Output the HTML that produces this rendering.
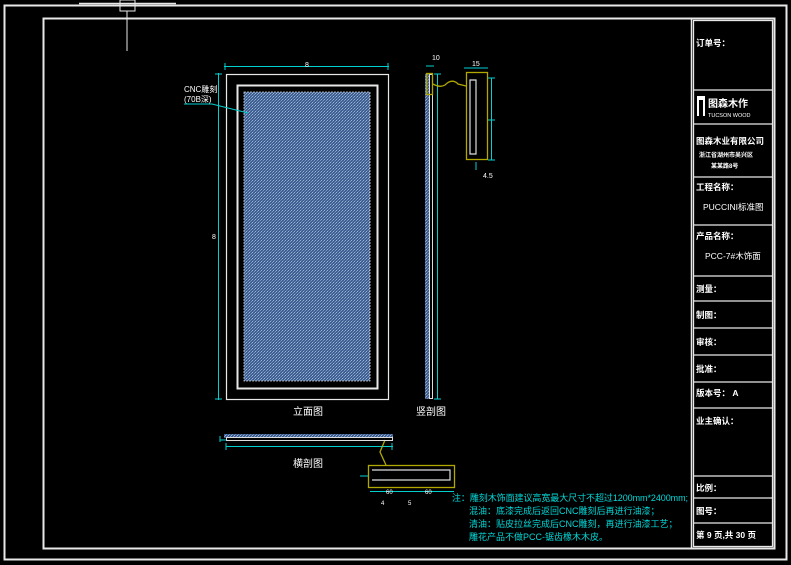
<!DOCTYPE html><html><head><meta charset="utf-8"><style>
html,body{margin:0;padding:0;background:#000;width:791px;height:565px;overflow:hidden}
svg{display:block}
text{font-family:"Liberation Sans","Noto Sans CJK SC",sans-serif;fill:#fff}
</style></head><body>
<svg width="791" height="565" viewBox="0 0 791 565" xmlns="http://www.w3.org/2000/svg">
<defs>
<pattern id="p" width="3" height="3" patternUnits="userSpaceOnUse">
<rect width="3" height="3" fill="#3f5f90"/><rect width="1" height="1" fill="#9ab4d8"/><rect x="2" y="1" width="1" height="1" fill="#7f9cc8"/><rect x="1" y="2" width="1" height="1" fill="#6a88b8"/>
</pattern>
</defs>
<g fill="none" stroke="#e8e8e8">
<rect x="4.5" y="5.5" width="782" height="554" stroke-width="2"/>
<rect x="43.5" y="18.5" width="731" height="530" stroke-width="2"/>
<line x1="79" y1="3.5" x2="176" y2="3.5" stroke-width="1.5"/>
<rect x="120" y="0" width="15" height="11" stroke-width="1"/>
<line x1="127" y1="11" x2="127" y2="51" stroke-width="1"/>
<line x1="691.5" y1="18" x2="691.5" y2="549" stroke-width="1.5"/>
<rect x="693.5" y="20.5" width="79" height="526" stroke-width="1.3"/>
<g stroke-width="1.3">
<line x1="693" y1="90" x2="773" y2="90"/><line x1="693" y1="124" x2="773" y2="124"/>
<line x1="693" y1="177" x2="773" y2="177"/><line x1="693" y1="225" x2="773" y2="225"/>
<line x1="693" y1="276" x2="773" y2="276"/><line x1="693" y1="301" x2="773" y2="301"/>
<line x1="693" y1="328" x2="773" y2="328"/><line x1="693" y1="355" x2="773" y2="355"/>
<line x1="693" y1="382" x2="773" y2="382"/><line x1="693" y1="408" x2="773" y2="408"/>
<line x1="693" y1="476" x2="773" y2="476"/><line x1="693" y1="498" x2="773" y2="498"/>
<line x1="693" y1="523" x2="773" y2="523"/>
</g>
<rect x="226.5" y="74.5" width="162" height="325" stroke-width="1.2"/>
<rect x="237.5" y="85.5" width="140" height="303" stroke-width="2"/>
</g>
<rect x="244" y="92" width="126" height="289" fill="url(#p)" stroke="#ccc" stroke-width="0.8" stroke-dasharray="2 1"/>
<g stroke="#00d0d0" fill="none" stroke-width="1">
<line x1="224" y1="66.5" x2="389" y2="66.5"/><line x1="225" y1="63" x2="225" y2="70"/><line x1="388" y1="63" x2="388" y2="70"/>
<line x1="218.5" y1="73" x2="218.5" y2="400"/><line x1="215" y1="74" x2="222" y2="74"/><line x1="215" y1="399" x2="222" y2="399"/>
<polyline points="184,104 212,104 248,113"/>
<line x1="437.5" y1="74" x2="437.5" y2="399"/><line x1="434" y1="74" x2="441" y2="74"/><line x1="434" y1="399" x2="441" y2="399"/>
<line x1="226" y1="446.5" x2="393" y2="446.5"/><line x1="226" y1="443" x2="226" y2="450"/><line x1="392" y1="443" x2="392" y2="450"/>
<line x1="491.5" y1="78" x2="491.5" y2="160"/><line x1="488" y1="78" x2="495" y2="78"/><line x1="488" y1="120" x2="495" y2="120"/><line x1="488" y1="160" x2="495" y2="160"/>
<line x1="464" y1="68" x2="488" y2="68"/><line x1="476" y1="162" x2="476" y2="170"/>
<line x1="426" y1="66" x2="434" y2="66"/>
<line x1="370" y1="491.5" x2="454" y2="491.5"/><line x1="360" y1="476" x2="368" y2="476"/>
<line x1="220" y1="436" x2="220" y2="442"/><line x1="220" y1="440" x2="226" y2="440"/>
</g>
<text x="184" y="92" font-size="8">CNC雕刻</text>
<text x="184" y="102" font-size="8">(70B深)</text>
<text x="305" y="67" font-size="7">8</text>
<text x="212" y="239" font-size="7">8</text>
<text x="432" y="60" font-size="7">10</text>
<text x="472" y="66" font-size="7">15</text>
<text x="483" y="178" font-size="7">4.5</text>
<rect x="425" y="74" width="4" height="325" fill="url(#p)"/>
<rect x="429.5" y="74.5" width="3" height="324" fill="none" stroke="#ddd" stroke-width="1"/>
<g fill="none" stroke="#b0a800" stroke-width="1.3">
<rect x="426.5" y="73.5" width="6" height="21"/>
<path d="M433 84 Q440 88 445 85 Q452 78 458 84 L466 86"/>
<rect x="466.5" y="72.5" width="21" height="87"/>
<rect x="368.5" y="465.5" width="86" height="22"/>
<path d="M385 440 L380 452 L386 465"/>
</g>
<g fill="none" stroke="#ddd" stroke-width="1.2">
<path d="M470 80 L476 80 L476 154 L470 154 Z"/>
<path d="M372 470 L450 470 L450 480 L372 480"/>
</g>
<rect x="224" y="434" width="169" height="4" fill="url(#p)"/>
<rect x="226.5" y="437.5" width="166" height="3" fill="none" stroke="#ddd" stroke-width="1"/>
<g font-size="10">
<text x="293" y="415">立面图</text>
<text x="416" y="415">竖剖图</text>
<text x="293" y="467">横剖图</text>
</g>
<g font-size="6"><text x="386" y="494">60</text><text x="425" y="494">60</text><text x="381" y="505">4</text><text x="408" y="505">5</text></g>
<g font-size="9">
<text x="452" y="501" style="fill:#00d8d8" textLength="236">注：雕刻木饰面建议高宽最大尺寸不超过1200mm*2400mm;</text>
<text x="469" y="514" style="fill:#00d8d8">混油：底漆完成后返回CNC雕刻后再进行油漆；</text>
<text x="469" y="527" style="fill:#00d8d8">清油：贴皮拉丝完成后CNC雕刻，再进行油漆工艺；</text>
<text x="469" y="540" style="fill:#00d8d8">雕花产品不做PCC-锯齿橡木木皮。</text>
</g>
<g font-size="8.5" font-weight="bold">
<text x="696" y="46">订单号：</text>
<text x="696" y="144">图森木业有限公司</text>
<text x="696" y="190">工程名称：</text>
<text x="696" y="239">产品名称：</text>
<text x="696" y="292">测量：</text>
<text x="696" y="318">制图：</text>
<text x="696" y="345">审核：</text>
<text x="696" y="372">批准：</text>
<text x="696" y="396">版本号： A</text>
<text x="696" y="424">业主确认：</text>
<text x="696" y="491">比例：</text>
<text x="696" y="514">图号：</text>
<text x="696" y="538">第 9 页,共 30 页</text>
</g>
<text x="699" y="157" font-size="6" font-weight="bold">浙江省湖州市吴兴区</text>
<text x="711" y="168" font-size="6" font-weight="bold">某某路8号</text>
<text x="703" y="210" font-size="8.5">PUCCINI标准图</text>
<text x="705" y="259" font-size="8.5">PCC-7#木饰面</text>
<rect x="697" y="96" width="8" height="20" fill="#fff"/>
<rect x="699" y="100" width="4" height="16" fill="#000"/>
<text x="708" y="107" font-size="10" font-weight="bold">图森木作</text>
<text x="708" y="117" font-size="5.5">TUCSON WOOD</text>
</svg>
</body></html>
